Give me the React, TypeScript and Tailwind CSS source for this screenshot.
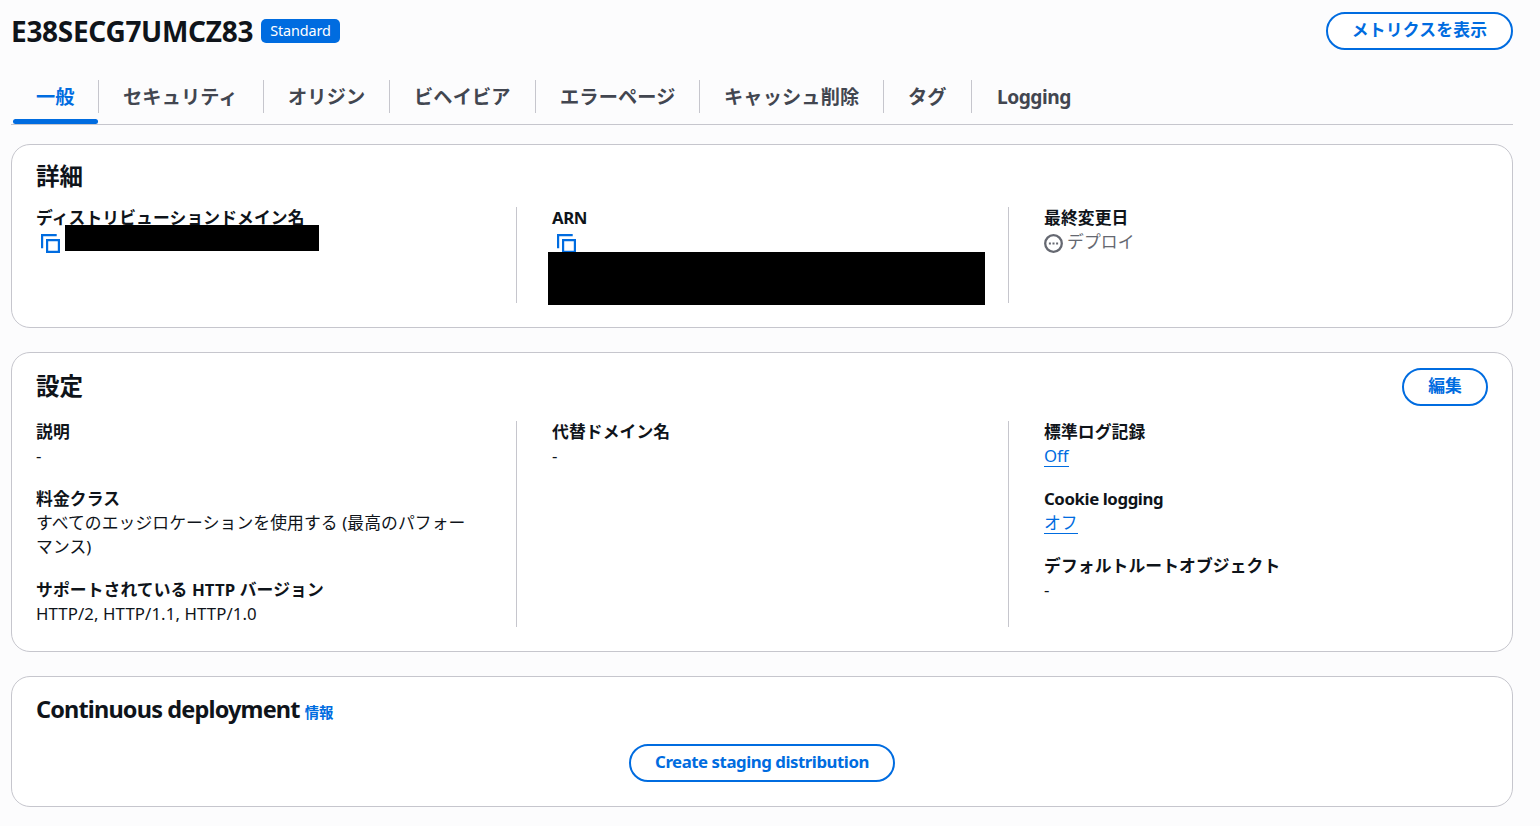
import type { ReactNode } from 'react'
import clsx from 'clsx'

const tabs = [
  { label: '一般', width: 'w-[87px]' },
  { label: 'セキュリティ', width: 'w-[165px]' },
  { label: 'オリジン', width: 'w-[126px]' },
  { label: 'ビヘイビア', width: 'w-[146px]' },
  { label: 'エラーページ', width: 'w-[164px]' },
  { label: 'キャッシュ削除', width: 'w-[184px]' },
  { label: 'タグ', width: 'w-[88px]' },
  { label: 'Logging', width: 'w-[125px]', tight: true },
]

function CopyIcon() {
  return (
    <svg width="20" height="20" viewBox="0 0 20 20" fill="none" stroke="#006ce0" strokeWidth="2.2">
      <path d="M1.1 14.2V1.1h14.6" />
      <path d="M6.1 6.1h11.8v11.8H6.1z" />
    </svg>
  )
}

function PendingIcon() {
  return (
    <svg width="19" height="19" viewBox="0 0 19 19" fill="none">
      <circle cx="9.5" cy="9.5" r="8.3" stroke="#656871" strokeWidth="2.3" />
      <path d="M4.9 8.5h2v2h-2zM8.5 8.5h2v2h-2zM12.1 8.5h2v2h-2z" fill="#656871" />
    </svg>
  )
}

function Button({ children, className }: { children: ReactNode; className?: string }) {
  return (
    <button
      className={clsx(
        'flex h-[38px] items-center justify-center rounded-[19px] border-2 border-[#006ce0] bg-white pb-[2px] text-[16.8px] font-bold leading-6 whitespace-nowrap text-[#006ce0]',
        className,
      )}
    >
      {children}
    </button>
  )
}

function Card({ children, className }: { children: ReactNode; className?: string }) {
  return (
    <section className={clsx('rounded-[19px] border border-[#c6c6cd] bg-white', className)}>
      {children}
    </section>
  )
}

function Columns({ children }: { children: ReactNode }) {
  return <div className="grid grid-cols-[480px_492px_1fr] pl-6">{children}</div>
}

function Column({ first, children }: { first?: boolean; children: ReactNode }) {
  return (
    <div
      className={clsx(
        'flex flex-col gap-[19px]',
        first ? 'pr-8' : 'border-l border-[#c6c6cd] pl-[35px]',
      )}
    >
      {children}
    </div>
  )
}

function Field({ label, tight, children }: { label: string; tight?: boolean; children: ReactNode }) {
  return (
    <div className="-mt-px mb-px text-[16.8px] leading-6 tracking-[0.1px]">
      <div className={clsx('h-6 font-bold whitespace-nowrap', tight && 'tracking-[-0.4px]')}>
        {label}
      </div>
      <div>{children}</div>
    </div>
  )
}

function Link({ children }: { children: ReactNode }) {
  return (
    <a className="inline-block h-[23px] border-b border-[#006ce0] tracking-normal text-[#006ce0]">
      {children}
    </a>
  )
}

export default function App() {
  return (
    <div className="min-h-[826px] w-full bg-[#fcfcfd] pr-[27px] pl-[11px] font-['Noto_Sans','Noto_Sans_CJK_JP',sans-serif] text-[#0f141a]">
      <header className="flex h-[76px] items-start justify-between pt-3">
        <div className="flex items-center">
          <h1 className="w-[250px] text-[28px] leading-[38px] font-bold tracking-[-0.3px] whitespace-nowrap">
            E38SECG7UMCZ83
          </h1>
          <span className="flex h-6 w-[79px] items-center justify-center rounded-[5px] bg-[#006ce0] text-[14.4px] tracking-[-0.1px] text-white">
            Standard
          </span>
        </div>
        <Button className="w-[187px] tracking-[0.2px]">メトリクスを表示</Button>
      </header>

      <nav className="flex h-[49px] border-b border-[#c6c6cd] pt-1 pl-px">
        {tabs.map((tab, i) => (
          <div
            key={tab.label}
            className={clsx('relative h-[33px] shrink-0', tab.width, i < tabs.length - 1 && 'border-r border-[#c6c6cd]')}
          >
            <a
              className={clsx(
                'block text-[19.2px] leading-[33px] font-bold whitespace-nowrap',
                tab.tight ? 'pl-[25px] tracking-[-0.5px]' : 'pl-6 tracking-[0.15px]',
                i === 0 ? 'text-[#006ce0]' : 'text-[#424650]',
              )}
            >
              {tab.label}
            </a>
            {i === 0 && (
              <span className="absolute top-[39px] left-px h-[5px] w-[85px] rounded-[2.5px] bg-[#006ce0]" />
            )}
          </div>
        ))}
      </nav>

      <main className="mt-[19px] flex flex-col gap-6">
        <Card className="h-[184px]">
          <h2 className="h-[62px] px-6 pt-[15px] text-[23.5px] leading-8 font-bold">詳細</h2>
          <Columns>
            <Column first>
              <Field label="ディストリビューションドメイン名">
                <div className="relative h-[72px] pt-1 pl-[5px]">
                  <CopyIcon />
                  <div className="absolute top-[-5px] left-[29.4px] h-[26px] w-[254px] bg-black" />
                </div>
              </Field>
            </Column>
            <Column>
              <Field label="ARN" tight>
                <div className="relative h-[72px] pt-1 pl-[5px]">
                  <CopyIcon />
                  <div className="absolute top-[22px] left-[-4.5px] h-[53px] w-[437px] bg-black" />
                </div>
              </Field>
            </Column>
            <Column>
              <Field label="最終変更日">
                <div className="flex items-start gap-1 text-[#656871]">
                  <span className="pt-1">
                    <PendingIcon />
                  </span>
                  デプロイ
                </div>
              </Field>
            </Column>
          </Columns>
        </Card>

        <Card className="h-[300px]">
          <div className="flex h-[68px] items-center justify-between px-6">
            <h2 className="pb-[2px] text-[23.5px] leading-8 font-bold">設定</h2>
            <Button className="w-[86px]">編集</Button>
          </div>
          <Columns>
            <Column first>
              <Field label="説明">-</Field>
              <Field label="料金クラス">
                すべてのエッジロケーションを使用する (最高のパフォー
                <br />
                マンス)
              </Field>
              <Field label="サポートされている HTTP バージョン">HTTP/2, HTTP/1.1, HTTP/1.0</Field>
            </Column>
            <Column>
              <Field label="代替ドメイン名">-</Field>
            </Column>
            <Column>
              <Field label="標準ログ記録">
                <Link>Off</Link>
              </Field>
              <Field label="Cookie logging" tight>
                <Link>オフ</Link>
              </Field>
              <Field label="デフォルトルートオブジェクト">-</Field>
            </Column>
          </Columns>
        </Card>

        <Card className="h-[131px]">
          <div className="flex h-[67px] items-baseline gap-[5px] px-6 pt-4">
            <h2 className="text-[23.5px] leading-8 font-bold tracking-[-0.85px] whitespace-nowrap">
              Continuous deployment
            </h2>
            <a className="text-[14.4px] font-bold text-[#006ce0]">情報</a>
          </div>
          <div className="flex justify-center">
            <Button className="w-[266px] tracking-[-0.45px]">Create staging distribution</Button>
          </div>
        </Card>
      </main>
    </div>
  )
}
